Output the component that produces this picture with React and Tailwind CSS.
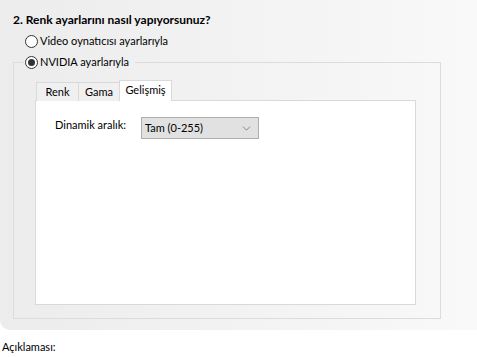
import { ChevronDown } from 'lucide-react'

function Radio({ checked }) {
  return (
    <span className="w-[13px] h-[13px] rounded-full border border-[#333] bg-white flex items-center justify-center shrink-0">
      {checked && <span className="w-[7px] h-[7px] rounded-full bg-[#333]" />}
    </span>
  )
}

export default function App() {
  return (
    <div className="w-[477px] h-[357px] bg-white font-['Lato',sans-serif] text-[11px] text-black overflow-hidden">
      <div className="h-[330px] rounded-bl-[10px] bg-gradient-to-r from-[#ececec] to-[#f9f9f9] pl-[13px] pt-[12px]">
        <p className="font-bold text-[12px] leading-[16px]">2. Renk ayarlarını nasıl yapıyorsunuz?</p>

        <div className="mt-[3px] h-[21px] flex items-center gap-[2px] pl-[12px]">
          <Radio />
          <span>Video oynatıcısı ayarlarıyla</span>
        </div>

        {/* Group box */}
        <fieldset className="w-[428px] h-[267px] border border-[#dcdcdc]">
          <legend className="ml-[10px] pl-[1px] pr-[6px] h-[21px] flex items-center gap-[2px]">
            <Radio checked />
            <span>NVIDIA ayarlarıyla</span>
          </legend>

          <div className="ml-[21px] mt-[7px]">
            {/* Tabs */}
            <div className="flex items-end h-[21px] pl-[1px]">
              <div className="w-[43px] h-[19px] border border-b-0 border-[#d9d9d9] bg-[#f0f0f0] flex items-center justify-center">Renk</div>
              <div className="-ml-px w-[42px] h-[19px] border border-b-0 border-[#d9d9d9] bg-[#f0f0f0] flex items-center justify-center">Gama</div>
              <div className="-ml-px w-[53px] h-[21px] border border-b-0 border-[#d9d9d9] bg-white relative z-10 flex items-center justify-center pb-[2px]">Gelişmiş</div>
            </div>

            {/* Tab panel */}
            <div className="-mt-px w-[381px] h-[205px] border border-[#d9d9d9] bg-white pl-[19px] pt-[16px] flex items-start">
              <span className="w-[86px] leading-[16px]">Dinamik aralık:</span>
              <div className="w-[118px] h-[22px] border border-[#adadad] bg-[#e1e1e1] flex items-center justify-between pl-[3px] pr-[5px]">
                <span>Tam (0-255)</span>
                <ChevronDown size={13} strokeWidth={1.2} className="text-[#555]" />
              </div>
            </div>
          </div>
        </fieldset>
      </div>

      <p className="pl-[2px] pt-[9px] leading-[16px]">Açıklaması:</p>
    </div>
  )
}
